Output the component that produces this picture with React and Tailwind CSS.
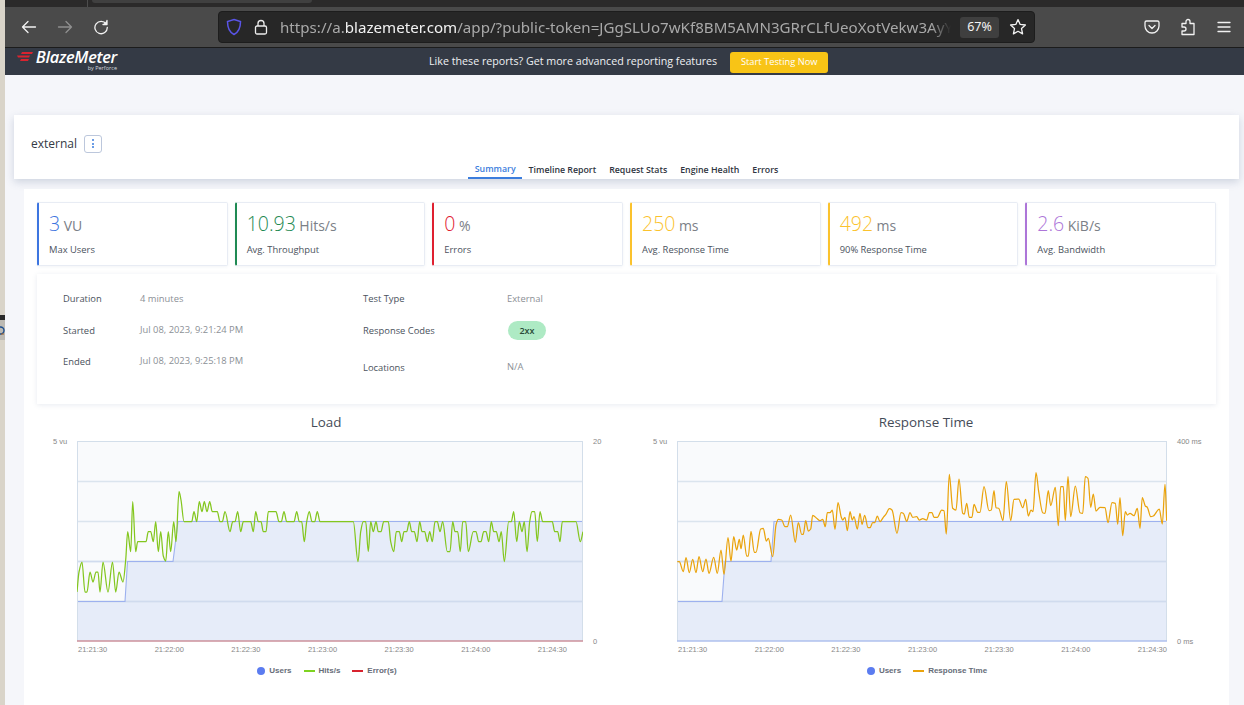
import React from "react";

const hits = [[77,592],[79,572],[82,562],[85,592],[87,592],[90,572],[93,582],[96,572],[98,572],[100,592],[103,562],[108,592],[112.5,562],[115.7,592],[119,572],[123,582],[125.7,560],[127.7,531.7],[130.7,551.7],[132.7,501.7],[135.7,551.7],[137.7,541.7],[146,541.7],[148.3,531.7],[150.7,531.7],[153.3,541.7],[155.7,521.7],[158.3,551.7],[160.7,531.7],[163.3,556],[165.7,561],[168.3,531.7],[170.7,551.7],[173.7,521.7],[176,541.7],[179,491.7],[181,500],[184,521.7],[191.7,521.7],[194,511.7],[196.7,521.7],[199.3,501.7],[202,511.7],[204.3,501.7],[207,511.7],[209.7,501.7],[212.3,511.7],[217.3,511.7],[220,521.7],[222.3,521.7],[225,511.7],[230,531.7],[232.7,521.7],[235,521.7],[237.7,511.7],[240.7,531.7],[243.3,521.7],[250.7,521.7],[253.3,531.7],[255.7,511.7],[258.3,521.7],[261,521.7],[263.3,531.7],[266,531.7],[268.3,511.7],[276,511.7],[279,521.7],[281.3,521.7],[284,511.7],[286.7,521.7],[294,521.7],[296.7,511.7],[299.3,521.7],[301.7,521.7],[304.3,541.7],[306.7,521.7],[309.3,511.7],[312,521.7],[314.7,521.7],[317.3,511.7],[320,521.7],[353.3,521.7],[358,561.7],[360.7,531.7],[363.3,521.7],[365.7,521.7],[368.3,551.7],[370.7,521.7],[373.3,531.7],[376,521.7],[378.3,531.7],[381,531.7],[383.7,521.7],[388.3,521.7],[390.7,541.7],[393.7,551.7],[396.3,531.7],[399.3,531.7],[401.7,541.7],[404,531.7],[406.7,531.7],[409.3,521.7],[411.7,531.7],[414.3,531.7],[417,541.7],[419.7,521.7],[422,531.7],[424.7,531.7],[427.3,541.7],[429.7,531.7],[432.3,541.7],[435,521.7],[437.3,521.7],[440,531.7],[442.7,521.7],[447.3,551.7],[450,551.7],[452.7,521.7],[455,531.7],[457.7,531.7],[460.3,551.7],[462.7,521.7],[465.7,521.7],[468.3,551.7],[473.3,531.7],[476,531.7],[478.7,541.7],[481,541.7],[483.7,531.7],[486,531.7],[488.7,541.7],[491.3,521.7],[493.7,531.7],[496.3,531.7],[499,541.7],[501.3,531.7],[504.3,561.7],[508.7,521.7],[511.3,521.7],[513.7,511.7],[516.7,541.7],[519.3,521.7],[522,531.7],[524.3,521.7],[527,551.7],[529.7,521.7],[532,511.7],[534.7,511.7],[537.3,541.7],[540,511.7],[542.7,521.7],[552.3,521.7],[554.7,531.7],[557.7,531.7],[560,541.7],[562.3,521.7],[576,521.7],[580.3,541.7],[583,531.7]];

const rt = [[677.3,561.7],[679.3,561.7],[683.3,571.7],[686,557.7],[689.3,572.7],[692.7,559.3],[696,572.7],[699,556.7],[702.7,571.7],[706,559],[709,573.3],[713.7,557.3],[717.3,573.3],[721,550],[724,574.3],[728,537.7],[731,561],[733.7,536.7],[736.7,550],[739.3,539.3],[741,548.7],[743.3,535],[746.7,556],[748.3,556],[751,531.3],[754.3,552.3],[756,552.3],[760.7,529],[763.3,528.3],[766.3,541],[768.3,538.3],[772.7,556.7],[776,525],[778.3,519.3],[781.7,520],[785,526.7],[787.3,526.7],[790.7,515],[795.3,542.3],[798.3,522.7],[801.7,534.3],[803.3,534.3],[805.7,520.7],[808.3,531],[810.7,529],[812.7,515.3],[816.7,518.3],[820,520.7],[822.7,519.3],[825.3,526.7],[827.3,512.7],[830,512.7],[832.3,510],[835,529.3],[838,502.7],[841.3,517.3],[842.7,520],[845,517.3],[847.3,530.7],[850,511.7],[852.3,520],[854,516.7],[857.3,529],[860,513.3],[862,524.3],[864.7,515.3],[868,527.7],[870,527.7],[872.7,522.7],[874.7,522.7],[877.3,516],[880,521.7],[883.3,517.3],[886,514],[889.3,508.7],[892,510],[897,533.3],[901,512.7],[903.3,513.3],[906.7,521.3],[910,512.7],[912.7,517.3],[916.7,516.7],[919.3,520],[922.7,518.7],[926.7,520],[929.3,512.7],[932,512.7],[934,517.3],[937.3,517.3],[941.7,510],[944,510.7],[946.3,534],[949.3,474.3],[952.7,508.3],[956,510],[959,479],[962.7,513.3],[964.3,514],[966.7,503.3],[969.3,517.3],[972,517.3],[974,504.3],[977.7,512.3],[980,512.3],[984,486.7],[989,510.7],[991.3,510],[994,490.7],[996,507.7],[998.7,508.3],[1003,520.7],[1006.3,481.7],[1010.7,520.7],[1014,499.3],[1018.7,499],[1022.7,507.7],[1025.7,499.3],[1028.3,516],[1031,510],[1033,511.7],[1036,472.7],[1038.7,491.7],[1042.7,512.7],[1045,513.3],[1048.3,490.7],[1050.7,505.7],[1055.3,487.3],[1058.3,525.7],[1060.7,486.7],[1063.3,486.7],[1065.3,520.7],[1068,476.7],[1070.7,516.7],[1075.3,486],[1080,512.7],[1082.7,513.3],[1085.3,476.7],[1088,478.3],[1090.7,507.3],[1093.3,494],[1096,511],[1100,507.3],[1105,507.7],[1108,522.7],[1112,502.7],[1115.3,503.3],[1117.7,524.3],[1120,497.7],[1122.7,535.7],[1125.3,511.7],[1127.3,515],[1130,513.3],[1134,515.7],[1137.3,508.3],[1140,528.3],[1142.3,497.7],[1145.3,506],[1147.3,507.3],[1150.7,516.7],[1153.3,516],[1159.3,509],[1162.3,524],[1165,484.3],[1166.7,520.7]];

function mono(pts) {
  const n = pts.length;
  const d = [];
  for (let i = 0; i < n - 1; i++) d.push((pts[i + 1][1] - pts[i][1]) / (pts[i + 1][0] - pts[i][0]));
  const m = pts.map((_, i) => {
    if (i === 0) return d[0];
    if (i === n - 1) return d[n - 2];
    if (d[i - 1] * d[i] <= 0) return 0;
    return (2 * d[i - 1] * d[i]) / (d[i - 1] + d[i]);
  });
  let s = `M${pts[0][0]} ${pts[0][1]}`;
  for (let i = 0; i < n - 1; i++) {
    const h = (pts[i + 1][0] - pts[i][0]) / 3;
    s += `C${(pts[i][0] + h).toFixed(1)} ${(pts[i][1] + m[i] * h).toFixed(1)} ${(pts[i + 1][0] - h).toFixed(1)} ${(pts[i + 1][1] - m[i + 1] * h).toFixed(1)} ${pts[i + 1][0]} ${pts[i + 1][1]}`;
  }
  return s;
}

const times = ["21:21:30", "21:22:00", "21:22:30", "21:23:00", "21:23:30", "21:24:00", "21:24:30"];

function Chart({ title, x0, w, users, line, color, left, right, rightW, legend, red }) {
  const top = `M${users.map((p) => p.join(" ")).join("L")}`;
  const area = `${top}L${x0 + w} 641L${x0} 641Z`;
  return (
    <div className="w-[600px] shrink-0">
      <div className="mb-[7px] mt-[1px] h-[24px] pr-[22px] text-center text-[13.4px] leading-[24px] text-[#444b57]">{title}</div>
      <div className="flex h-[209px]">
        <div className="mt-[-4px] w-[40px] shrink-0 pl-[16px] text-[7.5px] leading-[9px] text-[#888] font-['Liberation_Sans',sans-serif]">{left}</div>
        <div className="shrink-0">
          <svg width={w} height={201} viewBox={`${x0} 441 ${w} 201`} className="block">
            <rect x={x0} y={441} width={w} height={200} fill="#f9fafc" />
            <path d={area} fill="#e6ecf9" />
            {[481.5, 521.5, 561.5, 601.5].map((y) => (
              <line key={y} x1={x0} x2={x0 + w} y1={y} y2={y} stroke="#dbe4ee" strokeWidth="1.4" />
            ))}
            {[561.5, 601.5].map((y) => (
              <line key={y} x1={users[2][0] - 50} x2={x0 + w} y1={y} y2={y} stroke="#d0dbee" strokeWidth="1.4" />
            ))}
            <path d={top} fill="none" stroke="#9db1ef" strokeWidth="1.1" />
            <rect x={x0 + 0.5} y={441.5} width={w - 1} height={199.5} fill="none" stroke="#d3deea" strokeWidth="1" />
            <line x1={x0} x2={x0 + w} y1={641} y2={641} stroke={red ? "#c96a74" : "#9db1ef"} strokeWidth="1" />
            <path d={mono(line)} fill="none" stroke={color} strokeWidth="1.25" strokeLinejoin="round" />
          </svg>
          <div className="mt-[3px] flex w-[490px] justify-between pl-px text-[7.5px] leading-[9px] text-[#888] font-['Liberation_Sans',sans-serif]">
            {times.map((t) => <span key={t}>{t}</span>)}
          </div>
        </div>
        <div className="mt-[-4px] shrink-0 pl-[10px] text-[7.5px] leading-[9px] text-[#888] font-['Liberation_Sans',sans-serif]" style={{ width: rightW }}>
          <div>{right[0]}</div>
          <div className="pt-[191px]">{right[1]}</div>
        </div>
      </div>
      <div className="mt-[16px] flex justify-center gap-[12px] pr-[20px] text-[8px] font-bold leading-[10px] text-[#666c78] font-['Liberation_Sans',sans-serif]">
        {legend.map((l) => (
          <div key={l.name} className="flex items-center gap-[4px]">
            {l.dot ? <span className="h-[8px] w-[8px] rounded-full bg-[#5b7cf0]" /> : <span className="h-[1.5px] w-[11px]" style={{ backgroundColor: l.color }} />}
            <span>{l.name}</span>
          </div>
        ))}
      </div>
    </div>
  );
}

function Stat({ value, unit, label, color, border }) {
  return (
    <div className={`h-[64px] rounded-[2px] border border-[#e8ecf4] border-l-[2px] bg-white pl-[10px] shadow-[0_1px_3px_rgba(90,110,150,0.08)] ${border}`}>
      <div className="mt-[7px] flex h-[28px] items-baseline">
        <span className={`text-[19.5px] leading-[28px] font-light ${color}`}>{value}</span>
        <span className="ml-[3.5px] text-[14px] leading-[28px] text-[#7b8087]">{unit}</span>
      </div>
      <div className="mt-[5px] text-[9.4px] leading-[13px] text-[#4b525d]">{label}</div>
    </div>
  );
}

function Tab({ children, active }) {
  return (
    <div className={`flex h-[18px] items-center px-[6.5px] pt-[2px] text-[8.8px] font-semibold ${active ? "border-b-2 border-[#3b7ddd] font-normal text-[#3b7ddd]" : "text-[#2f3541]"}`}>{children}</div>
  );
}

export default function App() {
  return (
    <div className="flex h-[705px] w-[1244px] overflow-hidden bg-[#f5f6fa] font-['Open_Sans',sans-serif]">
      <div className="w-[5px] shrink-0 bg-[#d9d4c9]">
        <div className="mt-[315px] h-[5px] bg-[#2a2a2a]" />
        <div className="h-[20px] overflow-hidden bg-[#bdbab3]">
          <svg width="5" height="20" viewBox="0 0 5 20" fill="none" className="block"><circle cx="0.5" cy="10.5" r="3.5" stroke="#1d4f8f" strokeWidth="1.4" /><path d="M1 14h3" stroke="#a8662a" strokeWidth="1" /></svg>
        </div>
      </div>
      <div className="min-w-0 flex-1">
        {/* tab strip */}
        <div className="flex h-[7px] bg-[#2b2a2a]">
          <div className="ml-[82px] h-[7px] w-px bg-[#4d4d4d]" />
          <div className="ml-[4px] h-[3px] w-[220px] rounded-b-[4px] bg-[#404040]" />
        </div>
        {/* toolbar */}
        <div className="flex h-[41px] items-center border-b border-[#1c1c1c] bg-[#4a4a4a] text-[#f4f4f4]">
          <svg className="ml-[16px]" width="16" height="16" viewBox="0 0 16 16" fill="none" stroke="#f2f2f2" strokeWidth="1.3" strokeLinecap="round" strokeLinejoin="round"><path d="M1.5 8h13M7 2.5 1.5 8 7 13.5" /></svg>
          <svg className="ml-[20px]" width="16" height="16" viewBox="0 0 16 16" fill="none" stroke="#8f8f8f" strokeWidth="1.3" strokeLinecap="round" strokeLinejoin="round"><path d="M14.5 8h-13M9 2.5 14.5 8 9 13.5" /></svg>
          <svg className="ml-[20px]" width="16" height="16" viewBox="0 0 16 16" fill="none" stroke="#f2f2f2" strokeWidth="1.3" strokeLinecap="round" strokeLinejoin="round"><path d="M13.2 5A6.2 6.2 0 1 0 14.3 8.5" /><path d="M14 1.5v4h-4" fill="#f2f2f2" /></svg>
          <div className="ml-[109px] flex h-[32px] w-[817px] items-center rounded-[4px] border border-[#1d1d1d] bg-[#272727]">
            <svg className="ml-[7px] shrink-0" width="16" height="18" viewBox="0 0 16 18" fill="none" stroke="#5a55e8" strokeWidth="1.5"><path d="M8 1.5 14.5 3.5C14.5 10 13 14 8 16.5 3 14 1.5 10 1.5 3.5Z" /></svg>
            <svg className="ml-[12px] shrink-0" width="14" height="16" viewBox="0 0 14 16" fill="none" stroke="#ededed" strokeWidth="1.3"><rect x="1.5" y="7" width="11" height="8" rx="1.5" /><path d="M4 7V4.5a3 3 0 0 1 6 0V7" /></svg>
            <div className="ml-[12px] w-[671px] shrink-0 overflow-hidden whitespace-nowrap text-[15.1px] leading-[20px] tracking-[0.02px] text-[#a9a9a9] font-['Noto_Sans',sans-serif] [mask-image:linear-gradient(to_right,black_97%,transparent)]">
              https://a.<span className="text-[#f2f2f2]">blazemeter.com</span>/app/?public-token=JGgSLUo7wKf8BM5AMN3GRrCLfUeoXotVekw3AyY
            </div>
            <div className="ml-[9px] flex h-[21px] w-[39px] shrink-0 items-center justify-center rounded-[3px] bg-[#3f3f3f] text-[12.5px] text-[#f2f2f2] font-['Noto_Sans',sans-serif]">67%</div>
            <svg className="ml-[10px] shrink-0" width="18" height="18" viewBox="0 0 18 18" fill="none" stroke="#f2f2f2" strokeWidth="1.3" strokeLinejoin="round"><path d="M9 1.6 11.2 6.4 16.4 7 12.5 10.6 13.6 15.9 9 13.3 4.4 15.9 5.5 10.6 1.6 7 6.8 6.4Z" /></svg>
          </div>
          <svg className="ml-[109px]" width="16" height="16" viewBox="0 0 16 16" fill="none" stroke="#f2f2f2" strokeWidth="1.3" strokeLinecap="round" strokeLinejoin="round"><path d="M2.5 2h11A1.5 1.5 0 0 1 15 3.5V7A7 7 0 0 1 1 7V3.5A1.5 1.5 0 0 1 2.5 2Z" /><path d="M5 6.5 8 9.5 11 6.5" /></svg>
          <svg className="ml-[20px]" width="16" height="18" viewBox="0 0 16 18" fill="none" stroke="#f2f2f2" strokeWidth="1.3" strokeLinejoin="round"><path d="M2 6h4V4a2 2 0 0 1 4 0v2h4v11H2v-3.5h2a2 2 0 0 0 0-4H2Z" transform="translate(0 -.5)" /></svg>
          <svg className="ml-[20px]" width="16" height="14" viewBox="0 0 16 14" stroke="#f2f2f2" strokeWidth="1.3" strokeLinecap="round"><path d="M2 2.5h12M2 7h12M2 11.5h12" /></svg>
        </div>
        {/* app header */}
        <div className="flex h-[27px] items-center bg-[#343a45]">
          <div className="flex h-[27px] w-[140px] shrink-0">
            <svg className="ml-[12px] mt-[4px] shrink-0" width="16" height="10" viewBox="0 0 16 10" fill="#d8232f"><path d="M5 0h11l-1 2H4ZM0 3.5h13l-1 2H1ZM4 7h8l-1 2H3Z" /></svg>
            <div className="w-[84px] shrink-0 text-right">
              <div className="mt-[1px] h-[16px] whitespace-nowrap text-[16.4px] font-semibold italic leading-[16px] tracking-[-0.3px] text-white">BlazeMeter</div>
              <div className="h-[7px] whitespace-nowrap text-[5.5px] leading-[7px] text-[#d5d8dd]">by Perforce</div>
            </div>
          </div>
          <div className="ml-[284px] text-[10.7px] text-[#eef0f3]">Like these reports? Get more advanced reporting features</div>
          <div className="ml-[13px] mt-[1px] flex h-[21px] w-[98px] items-center justify-center rounded-[3px] bg-[#f8c416] text-[9.3px] text-white">Start Testing Now</div>
        </div>
        {/* title card */}
        <div className="ml-[9px] mt-[40px] h-[64px] w-[1225px] bg-white shadow-[0_3px_8px_rgba(70,90,130,0.22)]">
          <div className="flex h-[46px] items-center pl-[17px] pt-[11px]">
            <span className="text-[12px] text-[#343a45]">external</span>
            <span className="ml-[7px] flex h-[18px] w-[18px] flex-col items-center justify-center gap-[1.5px] rounded-[3px] border border-[#bcc7dc]">
              <i className="h-[2px] w-[2px] rounded-full bg-[#3b7ddd]" />
              <i className="h-[2px] w-[2px] rounded-full bg-[#3b7ddd]" />
              <i className="h-[2px] w-[2px] rounded-full bg-[#3b7ddd]" />
            </span>
          </div>
          <div className="flex justify-center">
            <div className="flex">
              <Tab active>Summary</Tab>
              <Tab>Timeline Report</Tab>
              <Tab>Request Stats</Tab>
              <Tab>Engine Health</Tab>
              <Tab>Errors</Tab>
            </div>
          </div>
        </div>
        {/* main */}
        <div className="ml-[19px] mt-[10px] h-[520px] w-[1205px] bg-white px-[13px] pt-[13px]">
          <div className="grid w-[1179px] grid-cols-6 gap-[7px]">
            <Stat value="3" unit="VU" label="Max Users" color="text-[#3d75e0]" border="border-l-[#3d75e0]" />
            <Stat value="10.93" unit="Hits/s" label="Avg. Throughput" color="text-[#1f8a53]" border="border-l-[#1f8a53]" />
            <Stat value="0" unit="%" label="Errors" color="text-[#df2030]" border="border-l-[#df2030]" />
            <Stat value="250" unit="ms" label="Avg. Response Time" color="text-[#fbc22d]" border="border-l-[#fbc22d]" />
            <Stat value="492" unit="ms" label="90% Response Time" color="text-[#fbc22d]" border="border-l-[#fbc22d]" />
            <Stat value="2.6" unit="KiB/s" label="Avg. Bandwidth" color="text-[#ad75d8]" border="border-l-[#ad75d8]" />
          </div>
          <div className="mt-[8px] flex h-[130px] w-[1179px] bg-white pl-[26px] pt-[18px] text-[9.4px] leading-[13px] shadow-[0_1px_5px_rgba(90,110,150,0.14)]">
            <div className="w-[300px] shrink-0">
              <div className="flex h-[13px]"><span className="w-[77px] text-[#4b525d]">Duration</span><span className="text-[#8b9096]">4 minutes</span></div>
              <div className="mt-[19px] flex h-[13px]"><span className="w-[77px] text-[#4b525d]">Started</span><span className="mt-[-1px] text-[#8b9096]">Jul 08, 2023, 9:21:24 PM</span></div>
              <div className="mt-[18px] flex h-[13px]"><span className="w-[77px] text-[#4b525d]">Ended</span><span className="mt-[-1px] text-[#8b9096]">Jul 08, 2023, 9:25:18 PM</span></div>
            </div>
            <div>
              <div className="flex h-[13px]"><span className="w-[144px] text-[#4b525d]">Test Type</span><span className="text-[#8b9096]">External</span></div>
              <div className="mt-[19px] flex h-[13px] items-center"><span className="w-[145px] text-[#4b525d]">Response Codes</span><span className="flex h-[19px] w-[38px] items-center justify-center rounded-full bg-[#aeeac4] text-[9px] font-semibold text-[#2a4a38]">2xx</span></div>
              <div className="mt-[24px] flex h-[13px]"><span className="w-[144px] text-[#4b525d]">Locations</span><span className="mt-[-1px] text-[#8b9096]">N/A</span></div>
            </div>
          </div>
          <div className="mt-[5px] flex">
            <Chart title="Load" x0={77} w={506} left="5 vu" right={["20", "0"]} rightW={54} users={[[77, 601.5], [125, 601.5], [127.5, 561.5], [173, 561.5], [178, 521.5], [583, 521.5]]} line={hits} color="#83c61e" red legend={[{ name: "Users", dot: true }, { name: "Hits/s", color: "#7ed321" }, { name: "Error(s)", color: "#d8232f" }]} />
            <Chart title="Response Time" x0={677} w={490} left="5 vu" right={["400 ms", "0 ms"]} rightW={60} users={[[677, 601.5], [722, 601.5], [725, 561.5], [771, 561.5], [774, 521.5], [1167, 521.5]]} line={rt} color="#eaa30c" legend={[{ name: "Users", dot: true }, { name: "Response Time", color: "#eaa30c" }]} />
          </div>
        </div>
      </div>
    </div>
  );
}
